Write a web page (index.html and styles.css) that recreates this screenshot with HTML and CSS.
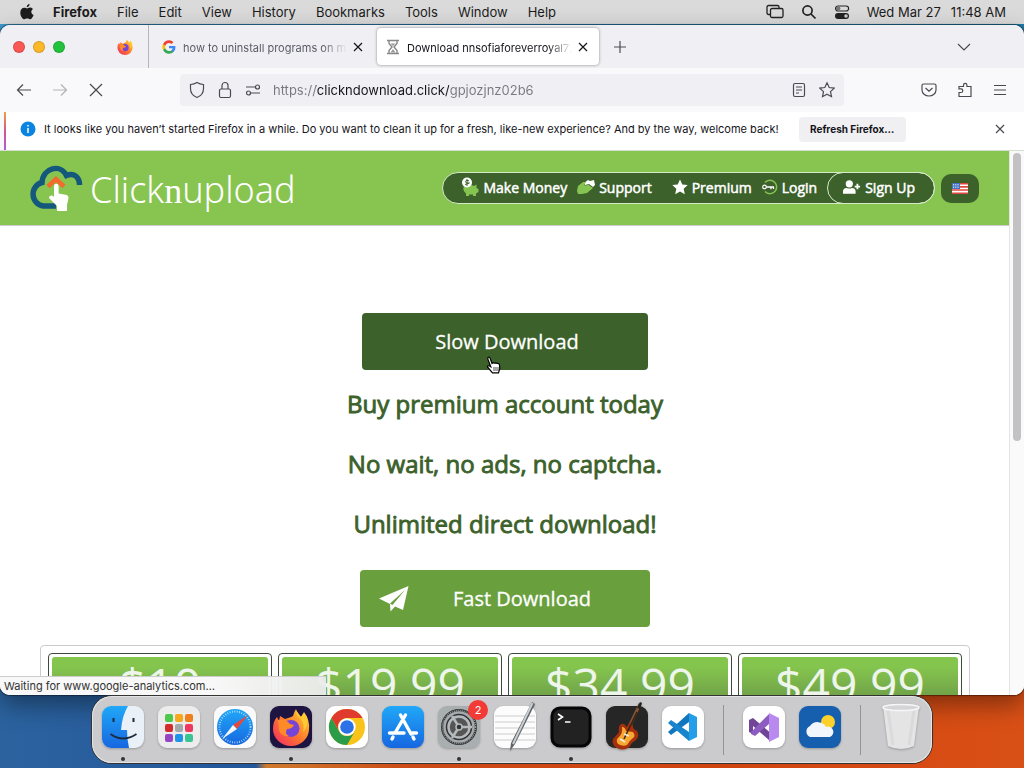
FILE: index.html
```html
<!DOCTYPE html>
<html lang="en">
<head>
    <meta charset="UTF-8">
    <meta name="viewport" content="width=device-width, initial-scale=1.0">
    <title>Download</title>
    <link rel="stylesheet" href="styles.css">
</head>
<body>
    <header class="menubar">
        <svg class="apple" width="14" height="16" viewBox="0 0 14 16"><path d="M9.6 0c.1 1.800-1.300 3.300-2.900 3.300C6.500 1.700 8 .2 9.600 0zM7 4.400c.6 0 1.600-.8 3-.8 1.300 0 2.300.6 3 1.500-2.500 1.500-2.100 4.900.6 5.900-.6 1.800-2.100 4.300-3.500 4.300-1.100 0-1.600-.7-2.900-.7s-1.800.7-2.900.7C2.500 15.300.3 11.900.3 8.700c0-3.100 2-4.900 3.900-4.900 1.200 0 2.200.6 2.800.6z"/></svg>
        <nav class="menus">
            <b>Firefox</b>
            <span>File</span>
            <span>Edit</span>
            <span>View</span>
            <span>History</span>
            <span>Bookmarks</span>
            <span>Tools</span>
            <span>Window</span>
            <span>Help</span>
        </nav>
        <div class="menu-status">
            <svg width="18" height="16" viewBox="0 0 18 16" fill="none" stroke="#222" stroke-width="1.300"><path d="M4 10.500H2.500A1.500 1.500 0 0 1 1 9V3a1.500 1.500 0 0 1 1.500-1.500h9A1.500 1.500 0 0 1 13 3v1"/><rect x="4.500" y="4.500" width="12.500" height="9" rx="1.500"/></svg>
            <svg width="16" height="16" viewBox="0 0 16 16" fill="none" stroke="#222" stroke-width="1.700"><circle cx="6.500" cy="6.500" r="4.600"/><path d="M10 10l4.500 4.500"/></svg>
            <svg width="16" height="16" viewBox="0 0 16 16"><rect x="1.600" y="2" width="13" height="5" rx="2.500" fill="none" stroke="#222" stroke-width="1.200"/><circle cx="4.200" cy="4.500" r="2.200" fill="#777"/><rect x="1" y="9" width="14" height="6" rx="3" fill="#222"/><circle cx="12" cy="12" r="1.800" fill="#ccc"/></svg>
            <span class="clock"><span>Wed Mar 27</span><span>11:48 AM</span></span>
        </div>
    </header>

    <main class="window">
        <div class="tabstrip">
            <div class="lights">
                <i class="light red"></i><i class="light yellow"></i><i class="light green"></i>
            </div>
            <div class="pinned">
                <svg width="16" height="16" viewBox="2 2 38 38"><use href="#fox"/></svg>
            </div>
            <div class="tab">
                <svg width="14" height="14" viewBox="0 0 48 48"><path fill="#4285f4" d="M46 24.500c0-1.600-.1-2.900-.4-4.300H24v8.500h12.500c-.5 2.800-2.100 5.200-4.500 6.800v5.600h7.200c4.300-4 6.800-9.800 6.800-16.600z"/><path fill="#34a853" d="M24 47c6.200 0 11.300-2 15.100-5.500L32 35.900c-2 1.300-4.700 2.200-8 2.200-6 0-11-4-12.800-9.500H3.700v5.800C7.500 41.900 15.100 47 24 47z"/><path fill="#fbbc05" d="M11.200 28.600a14 14 0 0 1 0-8.900v-5.800H3.700a23 23 0 0 0 0 20.500z"/><path fill="#ea4335" d="M24 10.200c3.400 0 6.400 1.200 8.800 3.400l6.500-6.500A22 22 0 0 0 24 1C15.100 1 7.500 6.100 3.700 13.900l7.500 5.800C13 14.200 18 10.200 24 10.200z"/></svg>
                <span class="tab-title">how to uninstall programs on mac</span>
                <button class="icon-btn small" aria-label="Close tab"><svg width="10" height="10" viewBox="0 0 10 10"><path d="M1 1l8 8M9 1L1 9"/></svg></button>
            </div>
            <div class="tab active">
                <svg width="14" height="16" viewBox="0 0 14 16" fill="none" stroke="#888" stroke-width="1.400"><path d="M1 1.500h12M1 14.500h12M3 2v2.500L6 8l-3 3.500V14M11 2v2.500L8 8l3 3.500V14"/><path d="M4.500 4.500h5L7 7zM4.500 13.500L7 10l2.500 3.500z" fill="#999" stroke="none"/></svg>
                <span class="tab-title">Download nnsofiaforeverroyal7299</span>
                <button class="icon-btn small" aria-label="Close tab"><svg width="10" height="10" viewBox="0 0 10 10"><path d="M1 1l8 8M9 1L1 9"/></svg></button>
            </div>
            <button class="icon-btn new-tab" aria-label="New tab"><svg width="14" height="14" viewBox="0 0 14 14"><path d="M7 1v12M1 7h12"/></svg></button>
            <button class="icon-btn all-tabs" aria-label="List all tabs"><svg width="14" height="14" viewBox="0 0 14 14"><path d="M1 4l6 6 6-6"/></svg></button>
        </div>

        <div class="toolbar">
            <div class="nav-buttons">
                <button class="icon-btn" aria-label="Back"><svg width="16" height="16" viewBox="0 0 16 16"><path d="M15 8H1.500M7 2.500L1.500 8 7 13.500"/></svg></button>
                <button class="icon-btn dim" aria-label="Forward"><svg width="16" height="16" viewBox="0 0 16 16"><path d="M1 8h13.500M9 2.500L14.500 8 9 13.500"/></svg></button>
                <button class="icon-btn" aria-label="Stop"><svg width="16" height="16" viewBox="0 0 16 16"><path d="M2 2l12 12M14 2L2 14"/></svg></button>
            </div>
            <div class="urlbar">
                <svg width="16" height="18" viewBox="0 0 16 18"><path d="M8 1.500C6 2.800 3.700 3.400 1.500 3.500v4C1.500 12 4 15 8 16.500c4-1.500 6.500-4.500 6.500-9v-4C12.300 3.400 10 2.800 8 1.500z"/></svg>
                <svg width="16" height="18" viewBox="0 0 16 18"><rect x="2.500" y="8" width="11" height="8.500" rx="1.500"/><path d="M5 8V4.500a3 3 0 0 1 6 0V8"/></svg>
                <svg width="16" height="18" viewBox="0 0 16 18"><path d="M1 6h9M6 12h9"/><circle cx="12.500" cy="6" r="2"/><circle cx="3.500" cy="12" r="2"/></svg>
                <input class="url" type="text" aria-label="Address" value="https://clickndownload.click/gpjozjnz02b6">
                <svg width="16" height="18" viewBox="0 0 16 18"><rect x="2.500" y="2.500" width="11" height="13" rx="1.500"/><path d="M5 6h6M5 9h6M5 12h3"/></svg>
                <svg width="16" height="18" viewBox="0 0 16 18"><path d="M8 1.800l2.200 4.700 5 .6-3.700 3.500 1 5.100L8 13.200l-4.500 2.500 1-5.100L.8 7.100l5-.6z"/></svg>
            </div>
            <div class="tools">
                <button class="icon-btn" aria-label="Save to Pocket"><svg width="16" height="16" viewBox="0 0 16 16"><path d="M2.500 2h11A1.500 1.500 0 0 1 15 3.500V8A7 6 0 0 1 1 8V3.500A1.500 1.500 0 0 1 2.500 2zM4.500 6L8 9.300 11.500 6"/></svg></button>
                <button class="icon-btn" aria-label="Extensions"><svg width="16" height="16" viewBox="0 0 16 16"><path d="M2 14.500v-4h2a1.800 1.800 0 0 0 0-3.600H2V4.500h4.500V3a1.700 1.700 0 0 1 3.400 0v1.500H14v10z"/></svg></button>
                <button class="icon-btn" aria-label="Menu"><svg width="14" height="16" viewBox="0 0 14 16"><path d="M1 3.500h12M1 8h12M1 12.500h12"/></svg></button>
            </div>
        </div>

        <div class="notice">
            <svg width="16" height="16" viewBox="0 0 16 16"><circle cx="8" cy="8" r="7.500" fill="#0a84e0"/><path d="M8 7v5M8 4v1.500" stroke="#fff" stroke-width="1.500"/></svg>
            <span class="notice-text">It looks like you haven’t started Firefox in a while. Do you want to clean it up for a fresh, like-new experience? And by the way, welcome back!</span>
            <button class="refresh">Refresh Firefox…</button>
            <button class="icon-btn notice-close" aria-label="Dismiss"><svg width="10" height="10" viewBox="0 0 10 10"><path d="M1 1l8 8M9 1L1 9"/></svg></button>
        </div>

        <div class="viewport">
            <div class="page">
                <div class="site-header">
                    <a class="logo" href="#">
                        <svg width="54" height="48" viewBox="0 0 54 48">
                            <path d="M27 42H14.500A12 12 0 0 1 13 18.500C14 3.500 31.500-.5 37.500 11.500 45 8.500 50.500 13 50.500 21" fill="none" stroke="#14587c" stroke-width="5.500"/>
                            <path d="M19 22.500l8-7.500 8 7.500" fill="none" stroke="#f26b2c" stroke-width="4.500"/>
                            <path d="M25 22a2.300 2.300 0 0 1 4.600 0v7.500l8 1.500q2 .5 2 3l-1.600 7v6H28v-5l-8-8q0-3 3-2.500l2 1.300z" fill="#fff"/>
                        </svg>
                        <span class="logo-text">Click<b>n</b>upload</span>
                    </a>
                    <nav class="site-nav">
                        <a href="#"><svg width="18" height="20" viewBox="0 0 18 20"><path d="M3 9q5-3 10 0l2.500-1.500V11l2 1v3l-2.500 1.500V19h-3v-1.500H8V19H5v-2.500Q1 13 3 9z" fill="#86c452"/><circle cx="6" cy="5.500" r="5" fill="#fff"/><path d="M8 3.800Q4.500 2.500 4.500 4.500T7.500 6 4 7.500M6 2v7" fill="none" stroke="#3c612b"/></svg>Make Money</a>
                        <a class="support" href="#"><svg width="18" height="16" viewBox="0 0 18 16"><path d="M7 4l4-3 2 1 4-1 1 5-2 2-4-3-4 1z" fill="#fff"/><path d="M1 7l5-4h3L7 6q2 1 4-.5L16 9l-6 5-5 1H1l-1-3z" fill="#86c452"/></svg>Support</a>
                        <a href="#"><svg width="16" height="16" viewBox="0 0 16 16"><path d="M8 .5l2.300 5 5.400.6-4 3.700 1.100 5.500L8 12.600l-4.800 2.700 1.100-5.500-4-3.700 5.400-.6z" fill="#fff"/></svg>Premium</a>
                        <a href="#"><svg width="16" height="16" viewBox="0 0 16 16" fill="none"><path d="M3 3.500a6.700 6.700 0 1 1 0 9" stroke="#86c452" stroke-width="1.500"/><circle cx="2.500" cy="8" r="1.800" stroke="#fff" stroke-width="1.200"/><path d="M4.300 8H12M9 8v2.300M11.500 8v2" stroke="#fff" stroke-width="1.300"/></svg>Login</a>
                        <a class="signup" href="#"><svg width="18" height="16" viewBox="0 0 20 16"><circle cx="7" cy="4.500" r="4" fill="#fff"/><path d="M0 15.500V13q0-4 4-4 3 1.400 6 0 4 0 4 4v2.500z" fill="#fff"/><path d="M16 4.500v6M13 7.500h6" stroke="#fff" stroke-width="2"/></svg>Sign Up</a>
                    </nav>
                    <button class="lang" aria-label="English">
                        <svg width="16" height="11" viewBox="0 0 16 11"><path fill="#fff" d="M0 0h16v11H0z"/><path d="M0 .8h16M0 3.900h16M0 7h16M0 10.200h16" stroke="#e0473d" stroke-width="1.600"/><path fill="#3f70c4" d="M0 0h8v6H0z"/><path d="M1 1.500h6M1 3h6M1 4.500h6" stroke="#fff" stroke-width=".7" stroke-dasharray="1 .8"/></svg>
                    </button>
                </div>

                <div class="content">
                    <button class="btn slow">Slow Download</button>
                    <h3>Buy premium account today</h3>
                    <h3>No wait, no ads, no captcha.</h3>
                    <h3>Unlimited direct download!</h3>
                    <button class="btn fast">
                        <svg width="30" height="26" viewBox="0 0 30 26"><path d="M0 12.500L29.500 0 24 24l-8-3.500-4.500 5-.5-7.500z" fill="#fff"/><path d="M11 17.500L26 4 13.500 19z" fill="#699f3d"/></svg>
                        <span>Fast Download</span>
                    </button>
                    <div class="plans">
                        <div class="plan"><div class="price">$10</div></div>
                        <div class="plan"><div class="price">$19.99</div></div>
                        <div class="plan"><div class="price">$34.99</div></div>
                        <div class="plan"><div class="price">$49.99</div></div>
                    </div>
                </div>
            </div>
            <div class="scrollbar"><div class="thumb"></div></div>
            <div class="status">Waiting for www.google-analytics.com…</div>
        </div>
    </main>

    <footer class="dock">
        <div class="app running">
            <svg viewBox="0 0 42 42"><rect width="42" height="42" rx="9" fill="#e9f0f8"/><path d="M9 0h17q-6 10-7 24h6q0 9 2 18H9a9 9 0 0 1-9-9V9a9 9 0 0 1 9-9z" fill="url(#blue)"/><path d="M11.500 12v4M31.500 12v4" stroke="#1b2b3d" stroke-width="2"/><path d="M8.500 28q12.500 9 26 0" fill="none" stroke="#1b2b3d" stroke-width="1.800"/></svg>
        </div>
        <div class="app">
            <svg viewBox="0 0 42 42"><rect width="42" height="42" rx="9" fill="#ececec"/><rect x="7" y="8" width="8" height="8" rx="2" fill="#4fc94b"/><rect x="17" y="8" width="8" height="8" rx="2" fill="#f5a81c"/><rect x="27" y="8" width="8" height="8" rx="2" fill="#f07e1d"/><rect x="7" y="18" width="8" height="8" rx="2" fill="#d42c2c"/><rect x="17" y="18" width="8" height="8" rx="2" fill="#a5a8aa"/><rect x="27" y="18" width="8" height="8" rx="2" fill="#f0375f"/><rect x="7" y="28" width="8" height="8" rx="2" fill="#9645c4"/><rect x="17" y="28" width="8" height="8" rx="2" fill="#1e95e8"/><rect x="27" y="28" width="8" height="8" rx="2" fill="#3bc493"/></svg>
        </div>
        <div class="app">
            <svg viewBox="0 0 42 42"><rect width="42" height="42" rx="9" fill="#fafafa"/><circle cx="21" cy="21" r="18" fill="url(#blue)"/><circle cx="21" cy="21" r="15.500" fill="none" stroke="#d6ecff" stroke-width="2" stroke-dasharray=".7 1.700"/><path d="M34 9L23 23l-4-4z" fill="#e8473d"/><path d="M8 33l11-14 4 4z" fill="#f4f6f8"/></svg>
        </div>
        <div class="app running">
            <svg viewBox="0 0 42 42"><rect width="42" height="42" rx="9" fill="#1e1442"/><g id="fox"><path d="M26 3q1 5 5 8l3-5q6 8 5 17a18 17 0 0 1-36 0q0-8 4-12l2 4 1-5 5 3q7-2 8-3 1-4 3-7z" fill="url(#fire)"/><circle cx="21" cy="22.500" r="8.500" fill="#7744d8"/><path d="M8 14q7-2 12 4l4 1q-2 4-7 4-3 5 2 7-8 1-10-6z" fill="#ff8a28"/><path d="M26 4q0 6 5 9 4 6 2 13 6-6 4-15l-3-4-3 4z" fill="#ffca34"/></g></svg>
        </div>
        <div class="app">
            <svg viewBox="0 0 42 42"><rect width="42" height="42" rx="9" fill="#fff"/><circle cx="21" cy="21" r="18" fill="#f9c31a"/><path d="M5.400 12A18 18 0 0 1 36.600 12H21a9 9 0 0 0-7.800 13.500z" fill="#e0392e"/><path d="M5.400 12l7.800 13.500A9 9 0 0 0 28.800 25.500L21 39A18 18 0 0 1 5.400 12z" fill="#2b9d4a"/><circle cx="21" cy="21" r="8.700" fill="#fff"/><circle cx="21" cy="21" r="6.800" fill="#2b72e6"/></svg>
        </div>
        <div class="app">
            <svg viewBox="0 0 42 42"><rect width="42" height="42" rx="9" fill="url(#blue)"/><g stroke="#fff" stroke-width="3.400" stroke-linecap="round"><path d="M18.500 9L29 28M31 31l1 2M23.500 9L13 27M11 31l-1 2M7.500 27H22M30 27h4.500"/></g></svg>
        </div>
        <div class="app running">
            <svg viewBox="0 0 42 42"><rect width="42" height="42" rx="9" fill="#a9afb1"/><circle cx="21" cy="21" r="18" fill="#313436"/><circle cx="21" cy="21" r="14.500" fill="none" stroke="#a6aaac" stroke-width="2.500"/><circle cx="21" cy="21" r="10.500" fill="#555" stroke="#b6babc" stroke-width="2.500"/><circle cx="21" cy="21" r="16.500" fill="none" stroke="#999" stroke-width="1.500" stroke-dasharray="1 1"/><path d="M21 21h13M21 21l-7-11M21 21l-7 11" stroke="#b6babc" stroke-width="2.500"/><circle cx="21" cy="21" r="3" fill="#313436" stroke="#b6babc" stroke-width="1.500"/></svg>
            <span class="badge">2</span>
        </div>
        <div class="app">
            <svg viewBox="0 0 42 42"><rect width="42" height="42" rx="9" fill="#fcfcfc"/><path d="M1 10h40M1 16h40M1 22h40M1 28h40M1 34h40" stroke="#ccc"/><path d="M38-4l3 2-20 40-5 7 1-8z" fill="#5d6265"/><path d="M38.500-3L19 38" stroke="#c9cfd2" stroke-width="2"/></svg>
        </div>
        <div class="app running">
            <svg viewBox="0 0 42 42"><rect x="2" y="2" width="38" height="38" rx="8" fill="#222" stroke="#060606" stroke-width="3"/><path d="M8 8l4.500 3L8 14M15 16h5.500" fill="none" stroke="#fff" stroke-width="1.600"/></svg>
        </div>
        <div class="app">
            <svg viewBox="0 0 42 42"><rect width="42" height="42" rx="9" fill="#262626"/><path d="M34-2L21 25" stroke="#875331" stroke-width="3"/><path d="M34-4l2 1-2 6-3-1z" fill="#222"/><path d="M15 18q4-1 5 3 2-1 3-4l4 2q-1 4 4 6 3 5-1 9-4 2-6 6-4 5-11 3-8-3-6-10 3-3 6-7-1-6 2-8z" fill="#a5300d"/><path d="M16 21q3 0 4 4l7 1q3 4 0 6-4 3-6 7-4 2-9-1-3-4 1-7 4-4 3-10z" fill="#f9a82f"/><path d="M31 6L18 33" stroke="#342418" stroke-width="1.500"/><path d="M14 33l5 3M18 28l5 2" stroke="#eee" stroke-width="1.500"/></svg>
        </div>
        <div class="app">
            <svg viewBox="0 0 42 42"><rect width="42" height="42" rx="9" fill="#fff"/><path d="M27 7l8 4v20l-8 4z" fill="#249ee8"/><path d="M27 7v9L9 29l-3-3z" fill="#1076bd"/><path d="M27 35v-9L9 14l-3 3z" fill="#1685ce"/></svg>
        </div>
        <i class="divider"></i>
        <div class="app">
            <svg viewBox="0 0 42 42"><rect width="42" height="42" rx="9" fill="#fff"/><path d="M6 14l4-2 20 17-4 5-16-14v8l-4-2z" fill="#704597"/><path d="M26 8L8 26v2l4 2 14-12z" fill="#8d5cc0"/><path d="M26 7l10 5v19l-10 5z" fill="#b889ef"/></svg>
        </div>
        <div class="app">
            <svg viewBox="0 0 42 42"><rect width="42" height="42" rx="9" fill="#155fae"/><circle cx="29" cy="16" r="7" fill="#fbd02c"/><path d="M11 31a6 6 0 0 1 0-11 9 8 0 0 1 16 1 5 5 0 0 1 4 10z" fill="#f0f6fc"/></svg>
        </div>
        <i class="divider"></i>
        <div class="app trash">
            <svg viewBox="0 0 42 42"><path d="M3 0h36l-5 40q-13 6-26 0z" fill="#e4e4e5"/><path d="M8 4l5 35M34 4l-5 35" stroke="#dadadb" stroke-width="3"/><ellipse cx="21" cy="1.500" rx="18" ry="3" fill="#d5d5d7" stroke="#f6f6f6" stroke-width="1.500"/></svg>
        </div>
    </footer>

    <svg class="cursor" width="16" height="18" viewBox="0 0 16 18"><path d="M2 1.500q1.500-1.200 2 .5l2 5.500 1-.8 1.500.5 1.500-.4 1 .6q2-.5 2.500 1.500l.3 3.500-1.300 4.500H6.500L1.500 11q0-1.800 2-1l1.300.8L1.800 3z" fill="#fff" stroke="#000" stroke-width="1.200"/><path d="M8 11v4M10 11v4M12 11v4" stroke="#000" stroke-width=".7"/></svg>

    <!-- shared gradients -->
    <svg class="defs" width="0" height="0">
        <linearGradient id="blue" x1="0" y1="0" x2="0" y2="1"><stop offset="0" stop-color="#20a8f8"/><stop offset="1" stop-color="#1767e0"/></linearGradient>
        <linearGradient id="fire" x1="1" y1="0" x2="0" y2="1"><stop offset="0" stop-color="#ffdb36"/><stop offset=".5" stop-color="#ff7a2a"/><stop offset="1" stop-color="#f0256a"/></linearGradient>
    </svg>
</body>
</html>
```

FILE: styles.css
```css
* {
    box-sizing: border-box;
}

body {
    margin: 0;
    height: 100vh;
    display: flex;
    flex-direction: column;
    overflow: hidden;
    position: relative;
    font-family: Inter, "Liberation Sans", sans-serif;
    font-size: 13px;
    color: #15141a;
    background:
        linear-gradient(to right, #3d9ad0, #1f7ba8) 0 0 / 100% 60px no-repeat,
        linear-gradient(to right, #2b639f 0%, #24569a 25%, #cf7a2c 26%, #cc4a17 40%, #d0430f 70%, #d95016 100%);
}

svg {
    display: block;
    flex: none;
}

button {
    font: inherit;
    color: inherit;
    border: none;
    padding: 0;
    cursor: pointer;
}

a {
    color: inherit;
    text-decoration: none;
}

/* system menu bar */
.menubar {
    display: flex;
    align-items: center;
    height: 24px;
    padding: 0 18px 0 20px;
    background: #dadada;
    color: #1c1c1c;
}

.apple {
    fill: #1c1c1c;
    margin-right: 19px;
}

.menus {
    display: flex;
    gap: 20px;
}

.menu-status {
    display: flex;
    align-items: center;
    gap: 17px;
    margin-left: auto;
}

.clock {
    display: flex;
    gap: 10px;
}

/* browser window */
.window {
    flex: 1;
    min-height: 0;
    display: flex;
    flex-direction: column;
    margin-top: 1px;
    border-radius: 10px;
    overflow: hidden;
    background: #f9f9fb;
    box-shadow: 0 0 1px 1px rgba(0, 0, 0, 0.4), 0 10px 25px rgba(0, 0, 0, 0.4);
}

.tabstrip {
    display: flex;
    align-items: center;
    height: 43px;
    background: #f0f0f4;
    font-size: 11px;
}

.lights {
    display: flex;
    gap: 8px;
    padding-left: 13px;
}

.light {
    width: 12px;
    height: 12px;
    border-radius: 50%;
    border: 1px solid rgba(0, 0, 0, 0.15);
}

.red {
    background: #fb5754;
}

.yellow {
    background: #fcb827;
}

.green {
    background: #22c33c;
}

.pinned {
    display: flex;
    align-items: center;
    align-self: stretch;
    padding: 0 15px 0 52px;
    border-right: 1px solid #b5b5bc;
}

.tab {
    display: flex;
    align-items: center;
    gap: 7px;
    width: 222px;
    height: 37px;
    padding: 0 6px 0 13px;
    color: #5b5b66;
}

.tab.active {
    margin-left: 6px;
    background: #fff;
    color: #15141a;
    border-radius: 4px;
    box-shadow: 0 0 3px rgba(0, 0, 0, 0.45);
    padding: 0 9px;
}

.tab-title {
    flex: 1;
    overflow: hidden;
    white-space: nowrap;
    line-height: 16px;
    padding-top: 2px;
    margin-right: -3px;
    mask-image: linear-gradient(to left, transparent, #000 24px);
}

.icon-btn {
    display: flex;
    align-items: center;
    justify-content: center;
    background: none;
}

.icon-btn svg,
.urlbar svg {
    fill: none;
    stroke: #4a4a52;
    stroke-width: 1.2;
}

.small {
    width: 14px;
    height: 20px;
}

.small svg {
    stroke: #15141a;
}

.new-tab {
    margin-left: 14px;
}

.all-tabs {
    margin: 0 53px 0 auto;
}

.dim {
    opacity: 0.4;
}

.toolbar {
    display: flex;
    align-items: center;
    height: 44px;
    padding: 0 17px 0 16px;
}

.nav-buttons,
.tools {
    display: flex;
    gap: 20px;
}

.urlbar {
    flex: 1;
    display: flex;
    align-items: center;
    gap: 12px;
    height: 32px;
    margin: 0 77px 0 76px;
    padding: 0 9px;
    border-radius: 4px;
    background: #f0f0f4;
}

.url {
    flex: 1;
    min-width: 0;
    height: 24px;
    border: none;
    outline: none;
    padding: 0;
    font: 13px Inter, "Liberation Sans", sans-serif;
    color: transparent;
    background: linear-gradient(to right, #77777f 43px, #15141a 43px, #15141a 176px, #77777f 176px);
    -webkit-background-clip: text;
    background-clip: text;
}

.notice {
    display: flex;
    align-items: center;
    height: 38px;
    margin-left: 4px;
    padding: 0 19px 4px 14px;
    background: #fff;
    border-left: 2px solid;
    border-image: linear-gradient(#f0a33c, #d3568b, #a75fe0) 1;
    font-size: 11px;
}

.notice-text {
    margin: 0 20px 0 8px;
    white-space: nowrap;
}

.refresh {
    height: 25px;
    width: 107px;
    border-radius: 4px;
    background: #f0f0f2;
    font-size: 10px;
    font-weight: 700;
}

.notice-close {
    margin-left: auto;
}

.viewport {
    flex: 1;
    min-height: 0;
    display: flex;
    position: relative;
    border-top: 1px solid #d5dfd0;
    background: #fff;
}

.page {
    flex: 1;
    overflow: hidden;
    font-family: "Open Sans", "Noto Sans", sans-serif;
}

.scrollbar {
    width: 15px;
    padding: 2px 3px;
    border-left: 1px solid #e4e4e4;
    background: #fafafa;
}

.thumb {
    width: 8px;
    height: 288px;
    border-radius: 4px;
    background: #c2c2c4;
}

/* site */
.site-header {
    display: flex;
    align-items: center;
    height: 75px;
    padding: 0 30px 0 29px;
    background: #87c450;
    border-bottom: 1px solid #ccc;
    color: #fff;
}

.logo {
    display: flex;
    align-items: center;
    gap: 7px;
    margin-right: auto;
}

.logo-text {
    padding-top: 4px;
    font-family: "Noto Sans", sans-serif;
    font-size: 36px;
    font-weight: 300;
    line-height: 40px;
}

.logo-text b {
    font-family: "Liberation Serif", serif;
    font-weight: 400;
}

.site-nav {
    display: flex;
    align-items: center;
    height: 32px;
    padding-left: 18px;
    border: 1px solid #d7eac7;
    border-radius: 16px;
    background: #3c612b;
    font-size: 14px;
    -webkit-text-stroke: 0.5px;
}

.site-nav a {
    display: flex;
    align-items: center;
    gap: 4px;
    height: 32px;
    padding-bottom: 2px;
    margin-right: 10px;
}

.site-nav a.support {
    margin-right: 20px;
}

.site-nav a.signup {
    margin: 0 -1px 0 0;
    padding: 0 19px 2px 15px;
    border: 1px solid #d7eac7;
    border-radius: 16px;
}

.lang {
    display: flex;
    align-items: center;
    justify-content: center;
    width: 38px;
    height: 29px;
    margin-left: 6px;
    border-radius: 10px;
    background: #3c612b;
}

.content {
    display: flex;
    flex-direction: column;
    align-items: center;
    padding: 87px 39px 0 40px;
}

.btn {
    width: 290px;
    height: 57px;
    border-radius: 4px;
    color: #fff;
    font-size: 20px;
    -webkit-text-stroke: 0.3px;
}

.slow {
    width: 286px;
    margin-bottom: 4px;
    padding-left: 4px;
    background: #3c612b;
}

.content h3 {
    margin: 0;
    color: #3c612b;
    font-size: 24px;
    font-weight: 400;
    line-height: 60px;
    -webkit-text-stroke: 0.9px;
}

.fast {
    display: flex;
    align-items: center;
    margin: 16px 0 18px;
    padding: 0 19px;
    background: #699f3d;
}

.fast span {
    flex: 1;
    padding-left: 4px;
}

.plans {
    display: flex;
    gap: 6px;
    align-self: stretch;
    height: 300px;
    padding: 7px;
    border: 1px solid #ccc;
    border-radius: 4px;
}

.plan {
    flex: 1;
    padding: 3px;
    border: 1px solid #3b4a3b;
    border-radius: 4px;
}

.price {
    height: 80px;
    border-radius: 3px 3px 0 0;
    background: linear-gradient(#84c54e 10px, #6f9f48 42px);
    color: #eef5ea;
    font-size: 48px;
    line-height: 56px;
    text-align: center;
}

/* loading message over the page */
.status {
    position: absolute;
    left: 0;
    bottom: 0;
    width: 326px;
    height: 19px;
    padding-left: 4px;
    border-top: 1px solid #ccc;
    background: linear-gradient(to right, #f8f8f8 65%, rgba(235, 235, 235, 0.95));
    font-size: 11px;
    line-height: 18px;
    color: #333;
}

/* dock */
.dock {
    display: flex;
    gap: 14px;
    align-self: center;
    height: 67px;
    margin: 1px 0 5px;
    padding: 10px;
    border-radius: 20px;
    background: #cbcbcd;
    box-shadow: 0 0 0 1px #333, inset 0 0 0 1px #e4e4e4;
    position: relative;
}

.app {
    position: relative;
    width: 42px;
    height: 42px;
}

.app svg {
    width: 42px;
    height: 42px;
    overflow: visible;
    filter: drop-shadow(0 1px 1px rgba(0, 0, 0, 0.25));
}

.running::after {
    content: "";
    position: absolute;
    left: 19px;
    top: 51px;
    width: 4px;
    height: 4px;
    border-radius: 50%;
    background: #333;
}

.badge {
    position: absolute;
    top: -6px;
    right: -8px;
    width: 20px;
    height: 20px;
    border-radius: 50%;
    background: #f23b36;
    color: #fff;
    font-size: 11px;
    line-height: 20px;
    text-align: center;
}

.divider {
    width: 1px;
    height: 50px;
    margin: -1px 5px;
    background: #949496;
}

.cursor {
    position: absolute;
    left: 486px;
    top: 356px;
}

.defs {
    position: absolute;
}
```
